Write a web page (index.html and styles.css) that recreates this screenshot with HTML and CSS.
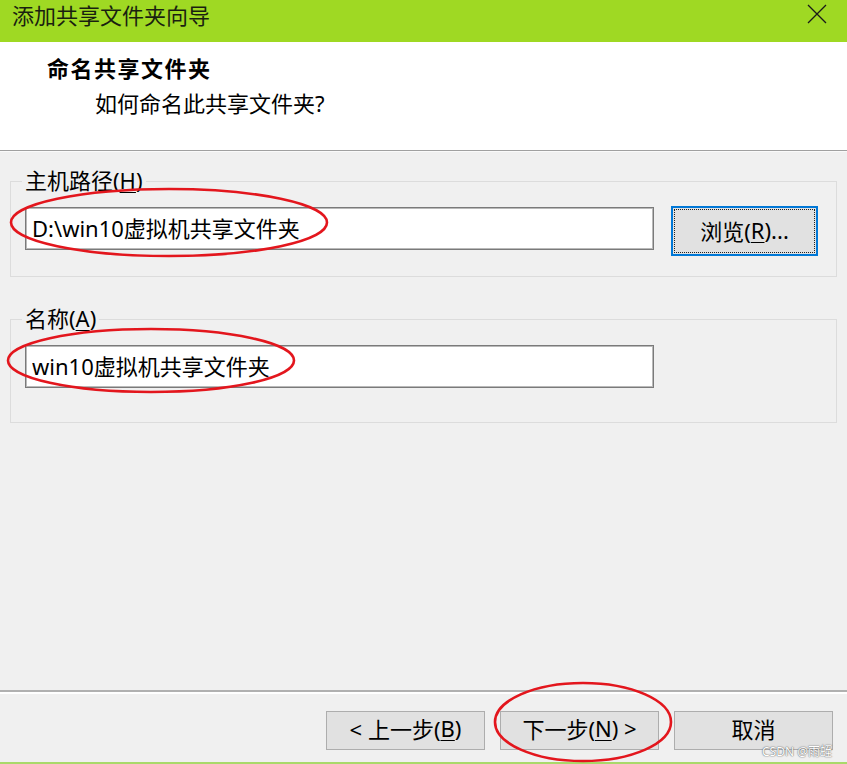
FILE: index.html
```html
<!DOCTYPE html>
<html lang="zh-CN">
<head>
<meta charset="utf-8">
<title>添加共享文件夹向导</title>
<link rel="stylesheet" href="styles.css">
</head>
<body>
<div class="window">
  <div class="titlebar">
    <span class="title">添加共享文件夹向导</span>
    <span class="close" aria-label="关闭">
      <svg width="20" height="20" viewBox="0 0 20 20"><path d="M1 1 L19 19 M19 1 L1 19" stroke="#1a1a1a" stroke-width="1.3" fill="none"/></svg>
    </span>
  </div>
  <div class="header">
    <div class="h-title">命名共享文件夹</div>
    <div class="h-sub">如何命名此共享文件夹?</div>
  </div>
  <div class="content">
    <fieldset class="group group-host">
      <legend>主机路径(<u>H</u>)</legend>
      <div class="row">
        <input class="field" type="text" value="D:\win10虚拟机共享文件夹" readonly>
        <button class="btn btn-browse"><span class="focus-ring">浏览(<u>R</u>)...</span></button>
      </div>
    </fieldset>
    <fieldset class="group group-name">
      <legend>名称(<u>A</u>)</legend>
      <div class="row">
        <input class="field" type="text" value="win10虚拟机共享文件夹" readonly>
      </div>
    </fieldset>
  </div>
  <div class="footer">
    <button class="btn btn-nav">&lt; 上一步(<u>B</u>)</button>
    <button class="btn btn-nav">下一步(<u>N</u>) &gt;</button>
    <button class="btn btn-nav">取消</button>
    <span class="watermark">CSDN @雨蛭</span>
  </div>
  <svg class="annot" width="847" height="764" viewBox="0 0 847 764">
    <ellipse cx="169" cy="222.5" rx="158" ry="33.5" fill="none" stroke="#e3161d" stroke-width="2.6"/>
    <ellipse cx="151" cy="360.5" rx="143" ry="31.5" fill="none" stroke="#e3161d" stroke-width="2.6"/>
    <ellipse cx="583" cy="722" rx="88" ry="39" fill="none" stroke="#e3161d" stroke-width="2.6"/>
  </svg>
</div>
</body>
</html>
```

FILE: styles.css
```css
html, body {
  margin: 0;
  padding: 0;
}
body {
  width: 847px;
  height: 764px;
  overflow: hidden;
  background: #f0f0f0;
  font-family: "Noto Sans", "Noto Sans CJK SC", sans-serif;
  font-size: 22px;
  color: #000;
}
.window {
  position: relative;
  width: 847px;
  height: 764px;
  display: flex;
  flex-direction: column;
  border-bottom: 2px solid #a9d96a;
  box-sizing: border-box;
}
.titlebar {
  height: 42px;
  flex: none;
  background: #9fd923;
  display: flex;
  align-items: flex-start;
  justify-content: space-between;
  padding: 0 20px 0 12px;
}
.title {
  line-height: 30px;
  color: #1a1f10;
}
.close {
  display: flex;
  margin-top: 4px;
}
.header {
  flex: none;
  background: #fff;
  border-bottom: 1px solid #a0a0a0;
  box-shadow: 0 1px 0 #fafafa;
  padding: 11px 0 0 47px;
  box-sizing: border-box;
  height: 109px;
}
.h-title {
  font-weight: bold;
  line-height: 30px;
  letter-spacing: 1.5px;
}
.h-sub {
  line-height: 30px;
  margin-top: 5px;
  padding-left: 48px;
}
.content {
  flex: 1;
  padding-top: 1px;
}
.group {
  margin: 0 10px;
  border: 1px solid #dcdcdc;
  padding: 13px 14px 20px 14px;
  min-width: 0;
}
.group-host {
  margin-top: 16px;
}
.group-name {
  margin-top: 29px;
  padding-bottom: 34px;
}
.group legend {
  padding: 0 3px 2px;
  margin-left: -3px;
  line-height: 24px;
}
u {
  text-decoration-thickness: 1px;
  text-underline-offset: 3px;
}
.row {
  display: flex;
  align-items: flex-start;
  gap: 17px;
}
.field {
  width: 629px;
  height: 43px;
  box-sizing: border-box;
  margin: 0;
  border: 1px solid #7a7a7a;
  box-shadow: inset 0 0 0 1px #b9b9b9;
  background: #fff;
  padding: 0 6px 4px;
  font-family: inherit;
  font-size: 22px;
  color: #000;
  outline: none;
}
.btn {
  font-family: inherit;
  font-size: 22px;
  color: #000;
  background: #e1e1e1;
  border: 1px solid #adadad;
  margin: 0;
  padding: 0;
  box-sizing: border-box;
  display: flex;
  align-items: center;
  justify-content: center;
}
.btn-browse {
  width: 147px;
  height: 50px;
  margin-top: -1px;
  border: 2px solid #0078d7;
  padding: 1px;
}
.focus-ring {
  flex: 1;
  align-self: stretch;
  display: flex;
  align-items: center;
  justify-content: center;
  border: 1px dotted #222;
  padding-bottom: 3px;
}
.footer {
  position: relative;
  flex: none;
  height: 72px;
  box-sizing: border-box;
  border-top: 2px solid #b0b0b0;
  box-shadow: inset 0 2px 0 #fff;
  display: flex;
  align-items: flex-start;
  justify-content: flex-end;
  gap: 15px;
  padding: 19px 14px 0 0;
}
.btn-nav {
  width: 159px;
  height: 39px;
  padding-bottom: 5px;
}
.watermark {
  position: absolute;
  right: 15px;
  bottom: 3px;
  font-size: 12px;
  line-height: 14px;
  color: #fff;
  text-shadow: 0 0 1.5px #555, 0 0 1px #777;
}
.annot {
  position: absolute;
  left: 0;
  top: 0;
  pointer-events: none;
}
```
